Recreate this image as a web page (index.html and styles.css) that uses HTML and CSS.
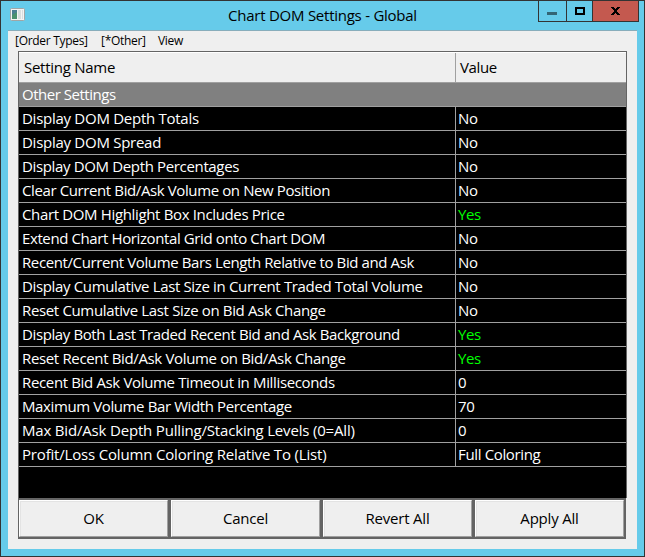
FILE: index.html
```html
<!DOCTYPE html>
<html lang="en">
<head>
<meta charset="utf-8">
<title>Chart DOM Settings - Global</title>
<link rel="stylesheet" href="styles.css">
</head>
<body>
<div class="window">
  <header class="titlebar">
    <svg class="app-icon" width="16" height="14" viewBox="0 0 16 14">
      <rect x=".5" y=".5" width="14" height="12" rx="1" fill="#f4f4f4" stroke="#a1a6a6"/>
      <rect x="2" y="2" width="5" height="9" fill="#4b7f93"/>
      <path d="M2 11V7l5-3v7z" fill="#4b916f"/>
      <rect x="8" y="2" width="3" height="9" fill="#d8dede"/>
      <rect x="12" y="2" width="1" height="9" fill="#d8dede"/>
    </svg>
    <h1 class="title">Chart DOM Settings - Global</h1>
    <div class="controls">
      <span class="control minimize"><svg width="10" height="3"><rect width="10" height="3" fill="#336575"/></svg></span>
      <span class="control maximize"><svg width="10" height="8"><rect x="1" y="1" width="8" height="6" fill="none" stroke="#000" stroke-width="2"/></svg></span>
      <span class="control close"><svg width="9" height="8" viewBox="0 0 9 8" shape-rendering="crispEdges"><path d="M0 0h3v1h1v1h1V1h1V0h3v1H8v1H7v1H6v2h1v1h1v1h1v1H6V7H5V6H4v1H3v1H0V7h1V6h1V5h1V3H2V2H1V1H0z"/></svg></span>
    </div>
  </header>
  <main class="client">
    <nav class="menu"><span class="menu-order">[Order Types]</span><span class="menu-other">[*Other]</span><span>View</span></nav>
    <section class="grid">
      <div class="row head"><span class="name">Setting Name</span><span class="value">Value</span></div>
      <div class="row group"><span class="name">Other Settings</span></div>
      <div class="row"><span class="name short">Display DOM Depth Totals</span><span class="value">No</span></div>
      <div class="row"><span class="name short">Display DOM Spread</span><span class="value">No</span></div>
      <div class="row"><span class="name">Display DOM Depth Percentages</span><span class="value">No</span></div>
      <div class="row"><span class="name long">Clear Current Bid/Ask Volume on New Position</span><span class="value">No</span></div>
      <div class="row"><span class="name">Chart DOM Highlight Box Includes Price</span><span class="value yes">Yes</span></div>
      <div class="row"><span class="name long">Extend Chart Horizontal Grid onto Chart DOM</span><span class="value">No</span></div>
      <div class="row"><span class="name long">Recent/Current Volume Bars Length Relative to Bid and Ask</span><span class="value">No</span></div>
      <div class="row"><span class="name">Display Cumulative Last Size in Current Traded Total Volume</span><span class="value">No</span></div>
      <div class="row"><span class="name">Reset Cumulative Last Size on Bid Ask Change</span><span class="value">No</span></div>
      <div class="row"><span class="name long">Display Both Last Traded Recent Bid and Ask Background</span><span class="value yes">Yes</span></div>
      <div class="row"><span class="name">Reset Recent Bid/Ask Volume on Bid/Ask Change</span><span class="value yes">Yes</span></div>
      <div class="row"><span class="name">Recent Bid Ask Volume Timeout in Milliseconds</span><span class="value">0</span></div>
      <div class="row"><span class="name long">Maximum Volume Bar Width Percentage</span><span class="value">70</span></div>
      <div class="row"><span class="name wide">Max Bid/Ask Depth Pulling/Stacking Levels (0=All)</span><span class="value">0</span></div>
      <div class="row"><span class="name wide">Profit/Loss Column Coloring Relative To (List)</span><span class="value">Full Coloring</span></div>
    </section>
    <footer class="buttons">
      <button>OK</button><button>Cancel</button><button>Revert All</button><button>Apply All</button>
    </footer>
  </main>
</div>
</body>
</html>
```
FILE: styles.css
```css
* { box-sizing: border-box; }
body {
  margin: 0;
  font: 15px/23px "Open Sans", "Noto Sans", sans-serif;
  letter-spacing: -0.35px;
  color: #000;
}
.window {
  width: 645px;
  height: 557px;
  border: 1px solid #333;
  background: #66cbea;
  padding: 0 7px 7px;
}
.titlebar {
  height: 29px;
  display: grid;
  grid-template-columns: 100px 1fr 100px;
  align-items: start;
}
.app-icon { margin: 7px 0 0 2px; }
.title {
  margin: 3px 0 0;
  font-size: 15px;
  font-weight: 400;
  line-height: 23px;
  letter-spacing: -0.25px;
  text-align: center;
}
.controls {
  display: flex;
  width: 101px;
  height: 21px;
  margin-left: 1px;
  border: 1px solid #333;
  border-top: 0;
}
.control svg { display: block; }
.minimize { width: 28px; padding: 11px 0 0 8px; border-right: 1px solid #333; }
.maximize { width: 26px; padding: 6px 0 0 8px; border-right: 1px solid #333; }
.close { flex: 1; padding: 6px 0 0 18px; background: #c4594f; }
.client {
  height: 519px;
  border-top: 1px solid #88adbb;
  background: #efefef;
  padding: 0 10px;
}
.menu {
  height: 20px;
  display: flex;
  margin-left: -3px;
  font-size: 12px;
  line-height: 20px;
  letter-spacing: -0.3px;
}
.menu-order { width: 86px; }
.menu-other { width: 57px; }
.grid {
  height: 447px;
  border: 1px solid #646464;
  border-bottom: 0;
  background: #000;
}
.row {
  display: flex;
  height: 24px;
  border-bottom: 1px solid #a0a0a0;
  color: #fff;
  white-space: pre;
}
.name { width: 437px; padding-left: 3px; border-right: 1px solid #a0a0a0; }
.short { letter-spacing: -0.27px; }
.long { letter-spacing: -0.39px; }
.wide { letter-spacing: -0.18px; }
.value { padding-left: 2px; }
.yes { color: #00ff00; }
.head {
  height: 31px;
  border-top: 1px solid #fff;
  background: #efefef;
  color: #000;
  line-height: 28px;
}
.head .name { padding-left: 5px; letter-spacing: -0.27px; }
.head .value { padding-left: 4px; }
.group { background: #808080; }
.group .name { border: 0; letter-spacing: -0.48px; }
.buttons {
  display: flex;
  gap: 3px;
  width: 608px;
  height: 41px;
  padding: 2px 2px 2px 1px;
  background: #646464;
}
button {
  flex: 1;
  padding: 0;
  border: 1px solid;
  border-color: #fff #a0a0a0 #a0a0a0 #fff;
  box-shadow: inset 1px 1px #e3e3e3;
  background: #efefef;
  color: #000;
  font: inherit;
  letter-spacing: -0.2px;
}
```
